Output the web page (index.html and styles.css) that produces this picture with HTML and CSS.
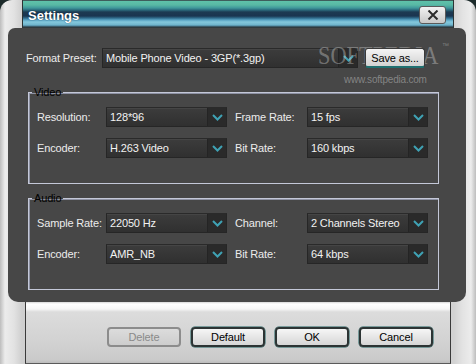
FILE: index.html
```html
<!DOCTYPE html>
<html>
<head>
<meta charset="utf-8">
<link rel="stylesheet" href="styles.css">
</head>
<body>
<div class="window">
  <div class="titlebar">
    <span class="title">Settings</span>
    <button class="close" aria-label="Close">
      <svg width="12" height="10" viewBox="0 0 12 10"><path d="M1.5 0.5 L10.5 9.5 M10.5 0.5 L1.5 9.5" stroke="#2a2a2a" stroke-width="2" fill="none"/></svg>
    </button>
  </div>
  <div class="panel">
    <div class="watermark">
      <span class="wm-logo">SOFTPEDIA</span>
      <span class="wm-tm">™</span>
      <span class="wm-url">www.softpedia.com</span>
    </div>
    <div class="preset-row">
      <span class="label preset-label">Format Preset:</span>
      <div class="combo wide"><span class="value">Mobile Phone Video - 3GP(*.3gp)</span><span class="arrow"><svg width="11" height="7" viewBox="0 0 11 7"><path d="M1 1 L5.5 5.5 L10 1" stroke="#3fa2b4" stroke-width="2" fill="none"/></svg></span></div>
      <button class="btn save">Save as...</button>
    </div>
    <fieldset class="group">
      <legend>Video</legend>
      <div class="grid">
        <span class="label">Resolution:</span>
        <div class="combo"><span class="value">128*96</span><span class="arrow"><svg width="11" height="7" viewBox="0 0 11 7"><path d="M1 1 L5.5 5.5 L10 1" stroke="#3fa2b4" stroke-width="2" fill="none"/></svg></span></div>
        <span class="label right">Frame Rate:</span>
        <div class="combo"><span class="value">15 fps</span><span class="arrow"><svg width="11" height="7" viewBox="0 0 11 7"><path d="M1 1 L5.5 5.5 L10 1" stroke="#3fa2b4" stroke-width="2" fill="none"/></svg></span></div>
        <span class="label">Encoder:</span>
        <div class="combo"><span class="value">H.263 Video</span><span class="arrow"><svg width="11" height="7" viewBox="0 0 11 7"><path d="M1 1 L5.5 5.5 L10 1" stroke="#3fa2b4" stroke-width="2" fill="none"/></svg></span></div>
        <span class="label right">Bit Rate:</span>
        <div class="combo"><span class="value">160 kbps</span><span class="arrow"><svg width="11" height="7" viewBox="0 0 11 7"><path d="M1 1 L5.5 5.5 L10 1" stroke="#3fa2b4" stroke-width="2" fill="none"/></svg></span></div>
      </div>
    </fieldset>
    <fieldset class="group audio">
      <legend>Audio</legend>
      <div class="grid">
        <span class="label">Sample Rate:</span>
        <div class="combo"><span class="value">22050 Hz</span><span class="arrow"><svg width="11" height="7" viewBox="0 0 11 7"><path d="M1 1 L5.5 5.5 L10 1" stroke="#3fa2b4" stroke-width="2" fill="none"/></svg></span></div>
        <span class="label right">Channel:</span>
        <div class="combo"><span class="value">2 Channels Stereo</span><span class="arrow"><svg width="11" height="7" viewBox="0 0 11 7"><path d="M1 1 L5.5 5.5 L10 1" stroke="#3fa2b4" stroke-width="2" fill="none"/></svg></span></div>
        <span class="label">Encoder:</span>
        <div class="combo"><span class="value">AMR_NB</span><span class="arrow"><svg width="11" height="7" viewBox="0 0 11 7"><path d="M1 1 L5.5 5.5 L10 1" stroke="#3fa2b4" stroke-width="2" fill="none"/></svg></span></div>
        <span class="label right">Bit Rate:</span>
        <div class="combo"><span class="value">64 kbps</span><span class="arrow"><svg width="11" height="7" viewBox="0 0 11 7"><path d="M1 1 L5.5 5.5 L10 1" stroke="#3fa2b4" stroke-width="2" fill="none"/></svg></span></div>
      </div>
    </fieldset>
  </div>
  <div class="footer">
    <button class="btn disabled">Delete</button>
    <button class="btn">Default</button>
    <button class="btn">OK</button>
    <button class="btn">Cancel</button>
  </div>
</div>
</body>
</html>
```
FILE: styles.css
```css
* { box-sizing: border-box; }
html, body { margin: 0; padding: 0; }
body {
  background: #1d2b2b;
  font-family: "Liberation Sans", Arial, sans-serif;
  font-size: 11px;
  letter-spacing: -0.15px;
}
.window {
  width: 476px;
  height: 364px;
  display: flex;
  flex-direction: column;
  border-radius: 12px 12px 0 0;
  overflow: hidden;
  background: linear-gradient(to right, #bdbdbd 0, #ececec 5px, #e2e2e2 14px, #cfcfcf 22px, #d2d2d2 454px, #e2e2e2 462px, #ececec 471px, #bdbdbd 476px);
}
.titlebar {
  height: 28px;
  margin: 0 22px;
  flex: none;
  display: flex;
  align-items: center;
  justify-content: space-between;
  padding: 1px 7px 0 5px;
  border-left: 1px solid #2c3434;
  border-right: 1px solid #2c3434;
  background: linear-gradient(to bottom,
    #3e5e5c 0, #3e5e5c 1px,
    #5fc2aa 1px, #58b8a4 5px,
    #3f979a 8px, #2b6a7c 10px,
    #1d3a52 12px, #1a3550 16px,
    #2f6a8a 18px, #5aa4c4 20px,
    #84c8dc 22px, #6fb4cc 25px,
    #4a8098 26px, #303a3e 27px, #303a3e 28px);
}
.title {
  color: #ffffff;
  font-weight: bold;
  font-size: 13px;
  letter-spacing: 0;
  text-shadow: 0 0 1px #102030;
  padding-top: 1px;
}
.close {
  width: 27px;
  height: 18px;
  padding: 0;
  margin: 0;
  border: 1px solid #5a5a5a;
  border-radius: 3px;
  background: linear-gradient(#f2f2f2, #c8c8c8);
  display: flex;
  align-items: center;
  justify-content: center;
}
.panel {
  position: relative;
  height: 274px;
  flex: none;
  margin: 0 10px 0 8px;
  background: #474747;
  border-radius: 7px 7px 10px 10px;
  padding: 20px 0 0 18px;
  color: #ececec;
}
.label { color: #ececec; white-space: nowrap; }
.preset-row {
  display: flex;
  align-items: center;
  height: 20px;
}
.preset-label { width: 76px; }
.combo {
  width: 121px;
  height: 20px;
  display: flex;
  background: linear-gradient(#3c3c3c, #303030);
  border: 1px solid #262626;
  border-top-color: #2a2a2a;
  box-shadow: inset 0 1px 0 #454545;
}
.combo.wide { width: 256px; }
.value {
  flex: 1;
  padding-left: 3px;
  line-height: 18px;
  color: #f2f2f2;
  white-space: nowrap;
  overflow: hidden;
}
.arrow {
  width: 19px;
  display: flex;
  align-items: center;
  justify-content: center;
  background: #2a2a2a;
  border-left: 1px solid #242424;
  padding-top: 1px;
}
.btn {
  position: relative;
  z-index: 2;
  font-family: "Liberation Sans", Arial, sans-serif;
  font-size: 11px;
  letter-spacing: -0.15px;
  color: #000;
  height: 20px;
  padding: 0;
  margin: 0;
  border: 2px solid #2c3434;
  border-radius: 4px;
  background: linear-gradient(#f6f6f6, #d6d6d6);
  box-shadow: 0 0 0 0.5px #1d6060;
}
.save {
  width: 60px;
  margin-left: 7px;
  border-width: 1px;
  border-color: #3a3a3a;
  border-bottom: 2px solid #1f7070;
  border-radius: 3px;
  background: linear-gradient(#f4f4f4, #d2d2d2);
  box-shadow: none;
}
.group {
  width: 411px;
  margin: 18px 0 0 2px;
  padding: 8px 10px 25px 8px;
  border: 1px solid #c4c8d8;
  box-shadow: inset 1px 1px 0 #8e92a4;
  min-width: 0;
}
.group.audio { margin-top: 8px; }
.group legend {
  color: #000;
  padding: 0 2px;
  margin-left: -5px;
  line-height: 13px;
  font-size: 11px;
}
.grid {
  display: grid;
  grid-template-columns: 69px 121px 80px 121px;
  row-gap: 11px;
  align-items: center;
}
.grid .right { padding-left: 8px; }
.watermark {
  position: absolute;
  left: 310px;
  top: 15px;
  width: 150px;
  height: 60px;
  z-index: 1;
  pointer-events: none;
}
.wm-logo {
  position: absolute;
  left: 0;
  top: 0;
  font-family: "Liberation Serif", "Times New Roman", serif;
  font-size: 26px;
  line-height: 26px;
  letter-spacing: 0;
  color: rgba(210, 210, 210, 0.4);
  transform: scaleX(0.86);
  transform-origin: left top;
  white-space: nowrap;
}
.wm-tm {
  position: absolute;
  left: 124px;
  top: -1px;
  font-size: 7px;
  color: rgba(210, 210, 210, 0.4);
}
.wm-url {
  position: absolute;
  left: 26px;
  top: 31px;
  font-size: 10px;
  line-height: 12px;
  color: rgba(175, 175, 175, 0.6);
  white-space: nowrap;
  letter-spacing: -0.2px;
}
.footer {
  flex: none;
  height: 62px;
  margin: 0 25px;
  border-left: 1px solid #3a3a3a;
  border-right: 1px solid #3a3a3a;
  border-bottom: 1px solid #5a5a5a;
  background: linear-gradient(#d6d6d6 0, #ffffff 2px, #f6f6f6 7px, #dcdcdc 10px, #d2d2d2 40px, #cacaca 58px, #b8b8b8 62px);
  display: flex;
  justify-content: flex-end;
  align-items: flex-start;
  gap: 10px;
  padding: 25px 17px 0 0;
}
.footer .btn { width: 74px; }
.btn.disabled {
  color: #8a8a8a;
  border-color: #8c8c8c;
  background: linear-gradient(#dcdcdc, #cdcdcd);
  box-shadow: none;
}
```
